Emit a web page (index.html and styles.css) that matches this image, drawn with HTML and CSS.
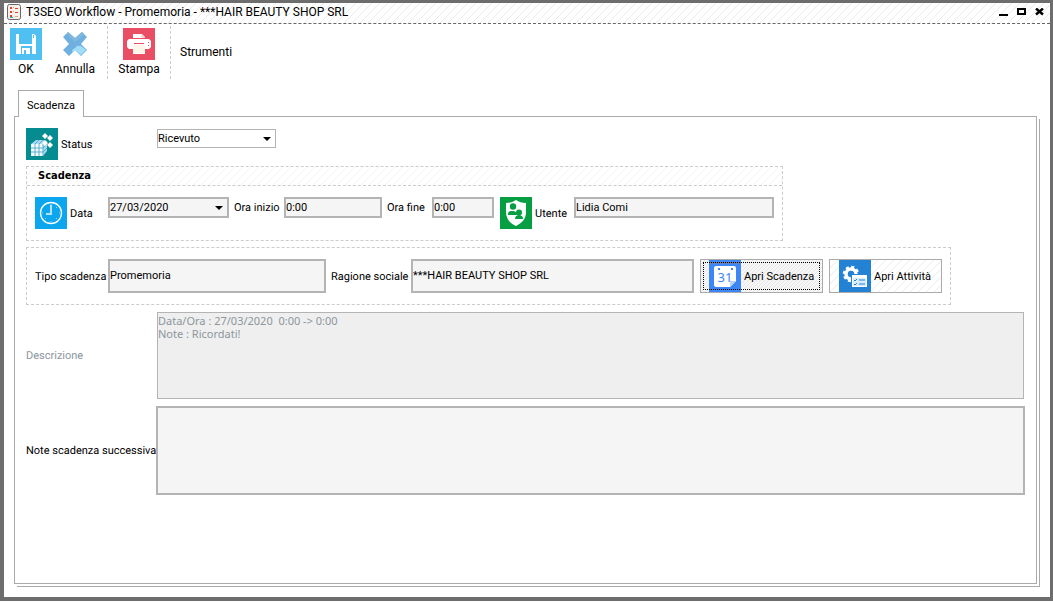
FILE: index.html
```html
<!DOCTYPE html>
<html lang="it">
<head>
<meta charset="utf-8">
<title>T3SEO Workflow - Promemoria</title>
<link rel="stylesheet" href="styles.css">
</head>
<body>
<div class="window">
  <header class="titlebar">
    <svg class="app-icon" width="14" height="16" viewBox="0 0 14 16">
      <rect x="0.5" y="0.5" width="13" height="15" rx="2" fill="#f7f1ec" stroke="#666"/>
      <path d="M3 3h2v2H3zM3 7h2v2H3zM3 11h2v2H3zM8 4h3v1H8zM8 8h3v1H8z" fill="#e2452c"/>
      <path d="M6 3h1v1H6zM6 7h1v1H6zM8 12h3v1H8z" fill="#f0a070"/>
      <path d="M3 13h3v1H3z" fill="#3aa0d8"/>
    </svg>
    <h1 class="title">T3SEO Workflow - Promemoria - ***HAIR BEAUTY SHOP SRL</h1>
    <div class="controls">
      <button class="control" aria-label="Riduci"><svg width="10" height="8" viewBox="0 0 10 8"><path d="M0 6h9v2H0z"/></svg></button>
      <button class="control" aria-label="Ingrandisci"><svg width="10" height="8" viewBox="0 0 10 8"><path d="M1 1h7v5H1z" fill="none" stroke="#000" stroke-width="2"/></svg></button>
      <button class="control" aria-label="Chiudi"><svg width="10" height="8" viewBox="0 0 10 8"><path d="M1 0.500L8 6.500M8 0.500L1 6.500" stroke="#000" stroke-width="2.400"/></svg></button>
    </div>
  </header>

  <nav class="toolbar">
    <div class="group">
      <button class="tool">
        <svg width="32" height="32" viewBox="0 0 32 32"><path d="M0 0h32v32H0z" fill="#50c0f2"/><path d="M6 6h3v10h13V6h2l2 2v18h-4v-8H11v8H6z" fill="#fff"/><path d="M12 20h8v6h-4v-4h-2v4h-2z" fill="#fff"/><path d="M23 7h1v3h-1z" fill="#50c0f2"/></svg>
        <span>OK</span>
      </button>
      <button class="tool">
        <svg width="32" height="32" viewBox="0 0 32 32"><path d="M9 4l7 6 7-6 5 5-6 7 6 6-6 6-6-6-6 6-6-6 6-6-6-7z" fill="#70b0e0"/><path d="M9 4l7 6 7-6 2 2-9 8-8-8z" fill="#82b8de"/><path d="M13 23c1-3 3-2 4-4s3-1 5-1l5 4-5 5-6-5-2 2z" fill="#a0def8"/></svg>
        <span>Annulla</span>
      </button>
    </div>
    <div class="group">
      <button class="tool">
        <svg width="32" height="32" viewBox="0 0 32 32"><path d="M0 0h32v32H0z" fill="#e94e65"/><path d="M10 6h9l3 3v2h4l2 2v6l-2 2h-4v5H10v-5H6l-2-2v-6l2-2h4z" fill="#fff"/><path d="M10 10h12v1H10zM11 15h10v1H11z" fill="#e94e65"/><path d="M10 17h12v8H10z" fill="#fff6ea"/><path d="M25 14h1v1h-1zM25 17h1v1h-1z" fill="#e94e65"/><path d="M19 6v3h3" fill="none" stroke="#f4b5b0"/></svg>
        <span>Stampa</span>
      </button>
    </div>
    <span class="tools-label">Strumenti</span>
  </nav>

  <main class="content">
    <div class="tabs"><button class="tab">Scadenza</button></div>
    <form class="panel">
      <div class="status-row">
        <label class="status-label" for="status">
          <svg width="32" height="32" viewBox="0 0 32 32"><path d="M0 0h32v32H0z" fill="#048c90"/><path d="M5 16l5-4h7l4 2v9l-4 5H6l-1-1z" fill="#a8d8f4"/><path d="M5 16h12v12H5z" fill="#f4fbff"/><path d="M5 20h12l4-4M5 24h12l4-4M9 28V16l4-4M13 28V16l4-4M17 28V16l4-3" fill="none" stroke="#5db0cc"/><path d="M19 5l3 3-3 3-3-3zM24 7l3 3-3 3-3-3zM19 12l3 3-3 3-3-3zM24 14l3 3-3 3-3-3z" fill="#fff"/></svg>
          Status
        </label>
        <span class="dropdown flat"><select id="status"><option>Ricevuto</option></select></span>
      </div>

      <section class="box schedule">
        <h2 class="box-title">Scadenza</h2>
        <div class="box-row">
          <label class="icon-label lead" for="date">
            <svg width="32" height="32" viewBox="0 0 32 32"><path d="M0 0h32v32H0z" fill="#0ba6ee"/><circle cx="16" cy="16" r="10.500" fill="none" stroke="#fff" stroke-width="1.300"/><path d="M16 8v9h-5" fill="none" stroke="#b5e2fa" stroke-width="2"/><path d="M16 7v1M16 24v1M24 16h1M7 16h1M22 10l-1 1M10 22l1-1M22 22l-1-1" stroke="#8fd5f8"/></svg>
            Data
          </label>
          <span class="dropdown raised date"><select id="date"><option>27/03/2020</option></select></span>
          <label class="line-label start-label" for="start">Ora inizio</label>
          <input class="field start" id="start" value="0:00">
          <label class="line-label end-label" for="end">Ora fine</label>
          <input class="field end" id="end" value="0:00">
          <label class="icon-label user-label" for="user">
            <svg width="32" height="32" viewBox="0 0 32 32"><path d="M0 0h32v32H0z" fill="#059e42"/><path d="M6 6c4 0 7-1 10-3 3 2 6 3 10 3v9c0 7-4 11-10 14C10 26 6 22 6 15z" fill="#fff"/><circle cx="13" cy="9.500" r="3.200" fill="#059e42"/><path d="M8 18c0-4 2-4 5-4 2 0 4 1 4 4z" fill="#059e42"/><circle cx="19" cy="15.500" r="3" fill="#059e42"/><path d="M15 22c0-3 2-4 4-4s4 1 4 4z" fill="#059e42"/></svg>
            Utente
          </label>
          <input class="field user" id="user" value="Lidia Comi">
        </div>
      </section>

      <section class="box details">
        <label class="lead" for="kind">Tipo scadenza</label>
        <input class="field tall kind" id="kind" value="Promemoria">
        <label class="inline-label" for="company">Ragione sociale</label>
        <input class="field tall company" id="company" value="***HAIR BEAUTY SHOP SRL">
        <button class="action focused" type="button">
          <svg width="32" height="32" viewBox="0 0 32 32"><path d="M0 0h32v32H0z" fill="#3c86f5"/><path d="M1 3h30" stroke="#d3702c" stroke-dasharray="1 1"/><path d="M7 6h18q2 0 2 2v13l-6 6H7q-2 0-2-2V8q0-2 2-2z" fill="#fff"/><path d="M21 27v-6h6z" fill="#b9d5fb"/><path d="M9 8h2v2H9zM22 8h2v2h-2z" fill="#3c86f5"/><text class="day" x="16" y="22">31</text></svg>
          Apri Scadenza
        </button>
        <button class="action" type="button">
          <svg width="32" height="32" viewBox="0 0 32 32"><path d="M0 0h32v32H0z" fill="#2482d4"/><circle cx="12" cy="14" r="5" fill="none" stroke="#fff" stroke-width="3.500"/><circle cx="12" cy="14" r="7" fill="none" stroke="#fff" stroke-width="2.500" stroke-dasharray="3 2.500"/><path d="M12 14h17v14H12z" fill="#2482d4"/><path d="M13 15h15v12H13z" fill="#fff"/><path d="M14 18h13v8H14z" fill="#d7edfc"/><path d="M15 20l1 1 2-2M15 24l1 1 2-2M20 20h6M20 24h6" fill="none" stroke="#2482d4"/></svg>
          Apri Attività
        </button>
      </section>

      <div class="note-row disabled">
        <label for="description">Descrizione</label>
        <textarea class="area thin" id="description" disabled>Data/Ora : 27/03/2020  0:00 -&gt; 0:00
Note : Ricordati!</textarea>
      </div>
      <div class="note-row">
        <label for="next-note">Note scadenza successiva</label>
        <textarea class="area thick" id="next-note"></textarea>
      </div>
    </form>
  </main>
</div>
</body>
</html>
```
FILE: styles.css
```css
* {
  box-sizing: border-box;
}

body {
  margin: 0;
  background: #fff;
  color: #000;
  font: 11px/13px Roboto, Tahoma, sans-serif;
}

svg {
  display: block;
  flex: none;
}

button,
input,
select,
textarea {
  margin: 0;
  padding: 0;
  border: 0;
  border-radius: 0;
  background: none;
  color: inherit;
  font: inherit;
}

label {
  text-rendering: geometricPrecision;
  white-space: nowrap;
}

.window {
  display: flex;
  flex-direction: column;
  min-height: calc(100vh - 1px);
  border: solid #6e6d6d;
  border-width: 3px 3px 4px 4px;
}

.titlebar {
  display: flex;
  align-items: center;
  height: 21px;
  padding: 0 5px 2px 3px;
  border-bottom: 1px dashed #666;
  background: linear-gradient(135deg, #fff 44%, #ebebeb 44% 56%, #fff 56%) 0 0 / 8px 8px;
}

.title {
  flex: 1;
  margin: 0 0 0 5px;
  font: 12px/16px Roboto, "Segoe UI", sans-serif;
}

.controls {
  display: flex;
  gap: 8px;
}

.toolbar {
  display: flex;
  align-items: flex-start;
  padding-top: 2px;
  font: 12px/16px Roboto, "Segoe UI", sans-serif;
}

.group {
  display: flex;
  gap: 7px;
  height: 53px;
  padding: 2px 11px 0 1px;
  border-right: 1px dashed #ccc;
}

.group + .group {
  padding: 2px 10px 0;
}

.tool {
  display: flex;
  flex-direction: column;
  align-items: center;
  gap: 1px;
  width: 42px;
}

.tools-label {
  padding: 18px 9px;
}

.content {
  display: flex;
  flex: 1;
  flex-direction: column;
  padding: 11px 13px 13px 10px;
}

.tabs {
  display: flex;
  padding-left: 4px;
}

.tab {
  z-index: 1;
  width: 66px;
  height: 27px;
  margin-bottom: -1px;
  padding-top: 2px;
  border: 1px solid #aaa;
  border-bottom: 0;
  background: #fff;
}

.panel {
  display: flex;
  flex: 1;
  flex-direction: column;
  align-items: flex-start;
  padding: 11px;
  border: 1px solid #aaa;
  box-shadow: 2px 2px 0 #fff, 3px 3px 0 #aaa;
}

.status-row {
  display: flex;
  align-items: flex-start;
}

.status-label,
.icon-label {
  display: flex;
  align-items: center;
  gap: 3px;
}

.status-label {
  width: 131px;
}

.dropdown {
  position: relative;
  display: flex;
  background: #fff;
}

.dropdown select {
  width: 100%;
  appearance: none;
}

.dropdown::after {
  position: absolute;
  top: calc(50% - 2px);
  right: 4px;
  border: solid transparent;
  border-width: 4px 4px 0;
  border-top-color: #000;
  content: "";
  pointer-events: none;
}

.flat {
  width: 119px;
  height: 19px;
  margin-top: 1px;
  border: 1px solid #b4b4b4;
}

.raised {
  height: 21px;
  border: 2px solid #b4b4b4;
  background: #f5f5f5;
}

.date {
  width: 121px;
}

.box {
  border: 1px dashed #ccc;
}

.schedule {
  margin-top: 6px;
}

.box-title {
  height: 19px;
  margin: 0;
  padding: 0 11px;
  border-bottom: 1px dashed #ccc;
  background: linear-gradient(135deg, #fff 44%, #f4f4f4 44% 56%, #fff 56%) 0 0 / 8px 8px;
  font: bold 11px/18px "DejaVu Sans Condensed", Tahoma, sans-serif;
}

.box-row {
  display: flex;
  align-items: flex-start;
  padding: 11px 8px;
}

.lead {
  width: 73px;
}

.line-label {
  padding: 4px 5px;
}

.start-label {
  width: 55px;
}

.end-label {
  width: 50px;
}

.user-label {
  width: 74px;
  margin-left: 6px;
}

.field {
  height: 21px;
  padding: 0 0 1px;
  border: 2px solid #b4b4b4;
  background: #f5f5f5;
}

.start {
  width: 98px;
}

.end {
  width: 62px;
}

.user {
  width: 200px;
}

.details {
  display: flex;
  align-items: center;
  margin-top: 6px;
  padding: 11px 8px;
}

.tall {
  height: 34px;
  padding-bottom: 2px;
}

.kind {
  width: 218px;
}

.inline-label {
  width: 85px;
  padding-left: 5px;
}

.company {
  width: 283px;
}

.action {
  display: flex;
  align-items: center;
  gap: 3px;
  width: 113px;
  height: 34px;
  margin-left: 6px;
  padding-left: 9px;
  border: 1px solid #aaa;
  background: linear-gradient(135deg, #fff 44%, #ebebeb 44% 56%, #fff 56%) 0 0 / 8px 8px;
  white-space: nowrap;
}

.focused {
  width: 123px;
  padding-left: 8px;
  outline: 1px dotted #000;
  outline-offset: -4px;
  background: linear-gradient(135deg, #f6f6f6 38%, #e6e6e6 38% 62%, #f6f6f6 62%) 0 0 / 4px 4px;
}

.day {
  fill: #3c86f5;
  font: 13px "Noto Sans", sans-serif;
  text-anchor: middle;
}

.note-row {
  display: flex;
  align-items: center;
  align-self: stretch;
  margin-top: 7px;
}

.note-row label {
  flex: none;
  width: 130px;
}

.area {
  flex: 1;
  font-family: "Noto Sans", Tahoma, sans-serif;
  resize: none;
}

.thin {
  height: 87px;
  margin: 0 1px;
  padding-top: 1px;
  border: 1px solid #b4b4b4;
  background: #efefef;
}

.thick {
  height: 89px;
  border: 2px solid #b4b4b4;
  background: #f5f5f5;
}

.disabled {
  color: #8c969c;
}
```
